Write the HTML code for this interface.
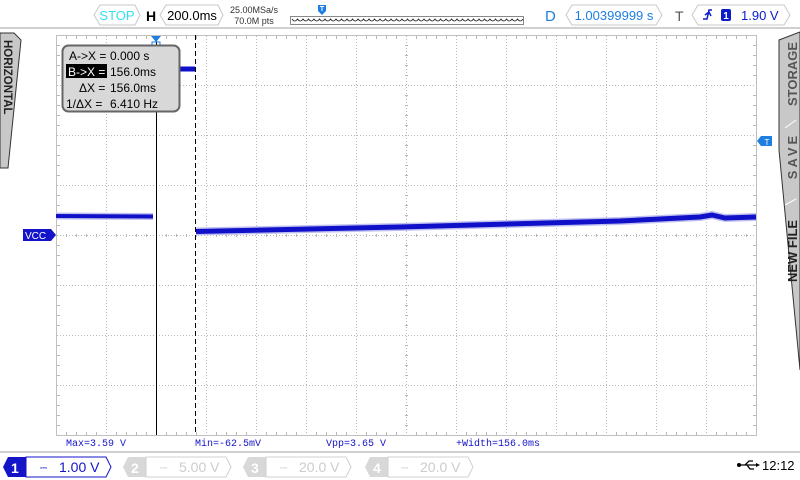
<!DOCTYPE html>
<html><head><meta charset="utf-8"><style>
html,body{margin:0;padding:0;background:#fff;}
svg{display:block;font-family:"Liberation Sans",sans-serif;}
</style></head><body>
<svg width="800" height="480" viewBox="0 0 800 480" xmlns="http://www.w3.org/2000/svg">
<rect width="800" height="480" fill="#fff"/>
<line x1="0" y1="28" x2="800" y2="28" stroke="#d0d0d0" stroke-width="2"/>
<path d="M100 5 L135 5 L140 15 L135 25 L100 25 L94 15 Z" fill="#fff" stroke="#c8c8c8"/>
<text x="117" y="20" font-size="13" fill="#33e0f0" text-anchor="middle">STOP</text>
<text x="146" y="21" font-size="14" font-weight="bold" fill="#000">H</text>
<path d="M166 5 L218 5 L223 15 L218 25 L166 25 L160 15 Z" fill="#fff" stroke="#c8c8c8"/>
<text x="192" y="20" font-size="13" fill="#000" text-anchor="middle">200.0ms</text>
<text x="254" y="13" font-size="9" fill="#333" text-anchor="middle">25.00MSa/s</text>
<text x="254" y="24" font-size="9" fill="#333" text-anchor="middle">70.0M pts</text>
<rect x="290.5" y="16.5" width="233" height="8" fill="#fff" stroke="#888"/>
<path d="M292 19 q2.75 4 5.5 0 q2.75 4 5.5 0 q2.75 4 5.5 0 q2.75 4 5.5 0 q2.75 4 5.5 0 q2.75 4 5.5 0 q2.75 4 5.5 0 q2.75 4 5.5 0 q2.75 4 5.5 0 q2.75 4 5.5 0 q2.75 4 5.5 0 q2.75 4 5.5 0 q2.75 4 5.5 0 q2.75 4 5.5 0 q2.75 4 5.5 0 q2.75 4 5.5 0 q2.75 4 5.5 0 q2.75 4 5.5 0 q2.75 4 5.5 0 q2.75 4 5.5 0 q2.75 4 5.5 0 q2.75 4 5.5 0 q2.75 4 5.5 0 q2.75 4 5.5 0 q2.75 4 5.5 0 q2.75 4 5.5 0 q2.75 4 5.5 0 q2.75 4 5.5 0 q2.75 4 5.5 0 q2.75 4 5.5 0 q2.75 4 5.5 0 q2.75 4 5.5 0 q2.75 4 5.5 0 q2.75 4 5.5 0 q2.75 4 5.5 0 q2.75 4 5.5 0 q2.75 4 5.5 0 q2.75 4 5.5 0 q2.75 4 5.5 0 q2.75 4 5.5 0 q2.75 4 5.5 0 q2.75 4 5.5 0" fill="none" stroke="#222" stroke-width="0.8"/>
<path d="M318 5 H326 V11 L322 15 L318 11 Z" fill="#1e7fe0"/>
<text x="322" y="11" font-size="7" fill="#fff" text-anchor="middle" font-weight="bold">T</text>
<text x="545" y="21" font-size="15" fill="#1e7fe0">D</text>
<path d="M572 5 L656 5 L662 15 L656 25 L572 25 L566 15 Z" fill="#fff" stroke="#c8c8c8"/>
<text x="614" y="20" font-size="13" fill="#1e7fe0" text-anchor="middle">1.00399999 s</text>
<text x="675" y="21" font-size="14" fill="#555">T</text>
<path d="M698 5 L784 5 L790 15 L784 25 L698 25 L692 15 Z" fill="#fff" stroke="#c8c8c8"/>
<path d="M703 19 H707 L709 10 H712 M705 15 L709 12 L711 16" fill="none" stroke="#0a1bc8" stroke-width="1.5"/>
<rect x="721" y="9" width="10" height="12" rx="2" fill="#0a1bc8"/>
<text x="726" y="19" font-size="10" fill="#fff" text-anchor="middle" font-weight="bold">1</text>
<text x="741" y="20" font-size="13" fill="#0a1bc8">1.90 V</text>

<path d="M0 33 L14 33 L21 40 L8 168 L0 168 Z" fill="#c8c8c8" stroke="#333" stroke-width="1"/>
<text transform="translate(4,40) rotate(90)" font-size="11.5" font-weight="bold" fill="#222">HORIZONTAL</text>
<path d="M800 32 L779 40 L779 150 L800 370 Z" fill="#c8c8c8" stroke="#333" stroke-width="1"/>
<text transform="translate(797,74) rotate(-90)" font-size="13" font-weight="bold" fill="#555" text-anchor="middle">STORAGE</text>
<text transform="translate(797,156) rotate(-90)" font-size="13" font-weight="bold" fill="#555" text-anchor="middle" letter-spacing="3">SAVE</text>
<text transform="translate(797,251) rotate(-90)" font-size="13" font-weight="bold" fill="#222" text-anchor="middle">NEW FILE</text>
<line x1="785" y1="128" x2="796" y2="120" stroke="#fff" stroke-width="1"/>
<line x1="785" y1="205" x2="796" y2="199" stroke="#fff" stroke-width="1"/>

<rect x="56.5" y="35.5" width="700" height="400" fill="none" stroke="#c0c0c0"/>
<g stroke="#b8b8b8" stroke-width="1" stroke-dasharray="1,2">
<line x1="106.5" y1="36" x2="106.5" y2="435"/><line x1="156.5" y1="36" x2="156.5" y2="435"/><line x1="206.5" y1="36" x2="206.5" y2="435"/><line x1="256.5" y1="36" x2="256.5" y2="435"/><line x1="306.5" y1="36" x2="306.5" y2="435"/><line x1="356.5" y1="36" x2="356.5" y2="435"/><line x1="406.5" y1="36" x2="406.5" y2="435"/><line x1="456.5" y1="36" x2="456.5" y2="435"/><line x1="506.5" y1="36" x2="506.5" y2="435"/><line x1="556.5" y1="36" x2="556.5" y2="435"/><line x1="606.5" y1="36" x2="606.5" y2="435"/><line x1="656.5" y1="36" x2="656.5" y2="435"/><line x1="706.5" y1="36" x2="706.5" y2="435"/>
<line x1="57" y1="85.5" x2="756" y2="85.5"/><line x1="57" y1="135.5" x2="756" y2="135.5"/><line x1="57" y1="185.5" x2="756" y2="185.5"/><line x1="57" y1="235.5" x2="756" y2="235.5"/><line x1="57" y1="285.5" x2="756" y2="285.5"/><line x1="57" y1="335.5" x2="756" y2="335.5"/><line x1="57" y1="385.5" x2="756" y2="385.5"/>
</g>
<g stroke="#b8b8b8" stroke-width="1">
<path d="M66.5 36v3M76.5 36v3M86.5 36v3M96.5 36v3M116.5 36v3M126.5 36v3M136.5 36v3M146.5 36v3M166.5 36v3M176.5 36v3M186.5 36v3M196.5 36v3M216.5 36v3M226.5 36v3M236.5 36v3M246.5 36v3M266.5 36v3M276.5 36v3M286.5 36v3M296.5 36v3M316.5 36v3M326.5 36v3M336.5 36v3M346.5 36v3M366.5 36v3M376.5 36v3M386.5 36v3M396.5 36v3M416.5 36v3M426.5 36v3M436.5 36v3M446.5 36v3M466.5 36v3M476.5 36v3M486.5 36v3M496.5 36v3M516.5 36v3M526.5 36v3M536.5 36v3M546.5 36v3M566.5 36v3M576.5 36v3M586.5 36v3M596.5 36v3M616.5 36v3M626.5 36v3M636.5 36v3M646.5 36v3M666.5 36v3M676.5 36v3M686.5 36v3M696.5 36v3M716.5 36v3M726.5 36v3M736.5 36v3M746.5 36v3"/>
<path d="M66.5 432v3M76.5 432v3M86.5 432v3M96.5 432v3M116.5 432v3M126.5 432v3M136.5 432v3M146.5 432v3M166.5 432v3M176.5 432v3M186.5 432v3M196.5 432v3M216.5 432v3M226.5 432v3M236.5 432v3M246.5 432v3M266.5 432v3M276.5 432v3M286.5 432v3M296.5 432v3M316.5 432v3M326.5 432v3M336.5 432v3M346.5 432v3M366.5 432v3M376.5 432v3M386.5 432v3M396.5 432v3M416.5 432v3M426.5 432v3M436.5 432v3M446.5 432v3M466.5 432v3M476.5 432v3M486.5 432v3M496.5 432v3M516.5 432v3M526.5 432v3M536.5 432v3M546.5 432v3M566.5 432v3M576.5 432v3M586.5 432v3M596.5 432v3M616.5 432v3M626.5 432v3M636.5 432v3M646.5 432v3M666.5 432v3M676.5 432v3M686.5 432v3M696.5 432v3M716.5 432v3M726.5 432v3M736.5 432v3M746.5 432v3"/>
<path d="M66.5 234v3M76.5 234v3M86.5 234v3M96.5 234v3M116.5 234v3M126.5 234v3M136.5 234v3M146.5 234v3M166.5 234v3M176.5 234v3M186.5 234v3M196.5 234v3M216.5 234v3M226.5 234v3M236.5 234v3M246.5 234v3M266.5 234v3M276.5 234v3M286.5 234v3M296.5 234v3M316.5 234v3M326.5 234v3M336.5 234v3M346.5 234v3M366.5 234v3M376.5 234v3M386.5 234v3M396.5 234v3M416.5 234v3M426.5 234v3M436.5 234v3M446.5 234v3M466.5 234v3M476.5 234v3M486.5 234v3M496.5 234v3M516.5 234v3M526.5 234v3M536.5 234v3M546.5 234v3M566.5 234v3M576.5 234v3M586.5 234v3M596.5 234v3M616.5 234v3M626.5 234v3M636.5 234v3M646.5 234v3M666.5 234v3M676.5 234v3M686.5 234v3M696.5 234v3M716.5 234v3M726.5 234v3M736.5 234v3M746.5 234v3"/>
<path d="M57 45.5h3M57 55.5h3M57 65.5h3M57 75.5h3M57 95.5h3M57 105.5h3M57 115.5h3M57 125.5h3M57 145.5h3M57 155.5h3M57 165.5h3M57 175.5h3M57 195.5h3M57 205.5h3M57 215.5h3M57 225.5h3M57 245.5h3M57 255.5h3M57 265.5h3M57 275.5h3M57 295.5h3M57 305.5h3M57 315.5h3M57 325.5h3M57 345.5h3M57 355.5h3M57 365.5h3M57 375.5h3M57 395.5h3M57 405.5h3M57 415.5h3M57 425.5h3"/>
<path d="M753 45.5h3M753 55.5h3M753 65.5h3M753 75.5h3M753 95.5h3M753 105.5h3M753 115.5h3M753 125.5h3M753 145.5h3M753 155.5h3M753 165.5h3M753 175.5h3M753 195.5h3M753 205.5h3M753 215.5h3M753 225.5h3M753 245.5h3M753 255.5h3M753 265.5h3M753 275.5h3M753 295.5h3M753 305.5h3M753 315.5h3M753 325.5h3M753 345.5h3M753 355.5h3M753 365.5h3M753 375.5h3M753 395.5h3M753 405.5h3M753 415.5h3M753 425.5h3"/>
<path d="M405 45.5h3M405 55.5h3M405 65.5h3M405 75.5h3M405 95.5h3M405 105.5h3M405 115.5h3M405 125.5h3M405 145.5h3M405 155.5h3M405 165.5h3M405 175.5h3M405 195.5h3M405 205.5h3M405 215.5h3M405 225.5h3M405 245.5h3M405 255.5h3M405 265.5h3M405 275.5h3M405 295.5h3M405 305.5h3M405 315.5h3M405 325.5h3M405 345.5h3M405 355.5h3M405 365.5h3M405 375.5h3M405 395.5h3M405 405.5h3M405 415.5h3M405 425.5h3"/>
</g>

<path d="M56 216 L153 216.5" stroke="#c0c0f0" stroke-width="7"/>
<path d="M56 216 L153 216.5" stroke="#1010c8" stroke-width="4"/>
<path d="M180 69 L195 69" stroke="#1010c8" stroke-width="5"/>
<path d="M196 231.5 L400 227 L620 221 L700 217 L712 215 L725 218 L756 217" fill="none" stroke="#c0c0f0" stroke-width="8"/>
<path d="M196 231.5 L400 227 L620 221 L700 217 L712 215 L725 218 L756 217" fill="none" stroke="#1010c8" stroke-width="5"/>

<line x1="156.5" y1="38" x2="156.5" y2="435" stroke="#000"/>
<line x1="195.5" y1="35" x2="195.5" y2="435" stroke="#000" stroke-dasharray="5,3"/>
<path d="M151 36 H161 L156 42 Z" fill="#1e7fe0"/>
<rect x="152" y="42" width="8" height="3" fill="none" stroke="#1e7fe0"/>

<rect x="62.5" y="45.5" width="117" height="66" rx="6" fill="#d8d8d8" stroke="#666" stroke-width="2"/>
<g font-size="12" fill="#000">
<text x="69" y="60">A-&gt;X =</text><text x="110" y="60">0.000 s</text>
<rect x="66" y="64" width="41" height="14" fill="#000"/>
<text x="68" y="76" fill="#fff">B-&gt;X =</text><text x="110" y="76">156.0ms</text>
<text x="79" y="92">ΔX =</text><text x="110" y="92">156.0ms</text>
<text x="66" y="108">1/ΔX =</text><text x="110" y="108">6.410 Hz</text>
</g>

<path d="M23 229 H51 L56 235 L51 241 H23 Z" fill="#1414c8"/>
<text x="25" y="239" font-size="10" fill="#fff">VCC</text>
<path d="M757 141 L761 136 H772 V146 H761 Z" fill="#1e7fe0"/>
<text x="767" y="145" font-size="8" fill="#fff" text-anchor="middle">T</text>

<g font-family="Liberation Mono,monospace" font-size="10" fill="#1414c8">
<text x="66" y="446">Max=3.59 V</text>
<text x="195" y="446">Min=-62.5mV</text>
<text x="326" y="446">Vpp=3.65 V</text>
<text x="456" y="446">+Width=156.0ms</text>
</g>
<line x1="0" y1="452" x2="800" y2="452" stroke="#d0d0d0" stroke-width="2"/>

<path d="M8 457 H26 V477 H8 L3 467 Z" fill="#1414c8"/>
<text x="11" y="473" font-size="14" font-weight="bold" fill="#fff">1</text>
<path d="M26 457 H106 L111 467 L106 477 H26 Z" fill="#fff" stroke="#1414c8"/>
<text x="40" y="471" font-size="9" fill="#1414c8">⎓</text>
<text x="59" y="472" font-size="14" fill="#1414c8">1.00 V</text>
<path d="M128 457 H146 V477 H128 L123 467 Z" fill="#d8d8d8"/>
<text x="131" y="473" font-size="14" font-weight="bold" fill="#fff">2</text>
<path d="M146 457 H226 L231 467 L226 477 H146 Z" fill="#fff" stroke="#d0d0d0"/>
<text x="160" y="471" font-size="9" fill="#ccc">⎓</text>
<text x="179" y="472" font-size="14" fill="#ccc">5.00 V</text>
<path d="M248 457 H266 V477 H248 L243 467 Z" fill="#d8d8d8"/>
<text x="251" y="473" font-size="14" font-weight="bold" fill="#fff">3</text>
<path d="M266 457 H346 L351 467 L346 477 H266 Z" fill="#fff" stroke="#d0d0d0"/>
<text x="280" y="471" font-size="9" fill="#ccc">⎓</text>
<text x="299" y="472" font-size="14" fill="#ccc">20.0 V</text>
<path d="M370 457 H388 V477 H370 L365 467 Z" fill="#d8d8d8"/>
<text x="373" y="473" font-size="14" font-weight="bold" fill="#fff">4</text>
<path d="M388 457 H468 L473 467 L468 477 H388 Z" fill="#fff" stroke="#d0d0d0"/>
<text x="401" y="471" font-size="9" fill="#ccc">⎓</text>
<text x="420" y="472" font-size="14" fill="#ccc">20.0 V</text>

<g stroke="#000" stroke-width="1.3" fill="none">
<path d="M739 465 H758 M745 465 L749 461 H753 M747 465 L750 469 H754"/>
</g>
<circle cx="739" cy="465" r="2" fill="#000"/>
<path d="M756 463 L760 465 L756 467 Z" fill="#000"/>
<text x="762" y="470" font-size="13" fill="#000">12:12</text>
</svg>
</body></html>
